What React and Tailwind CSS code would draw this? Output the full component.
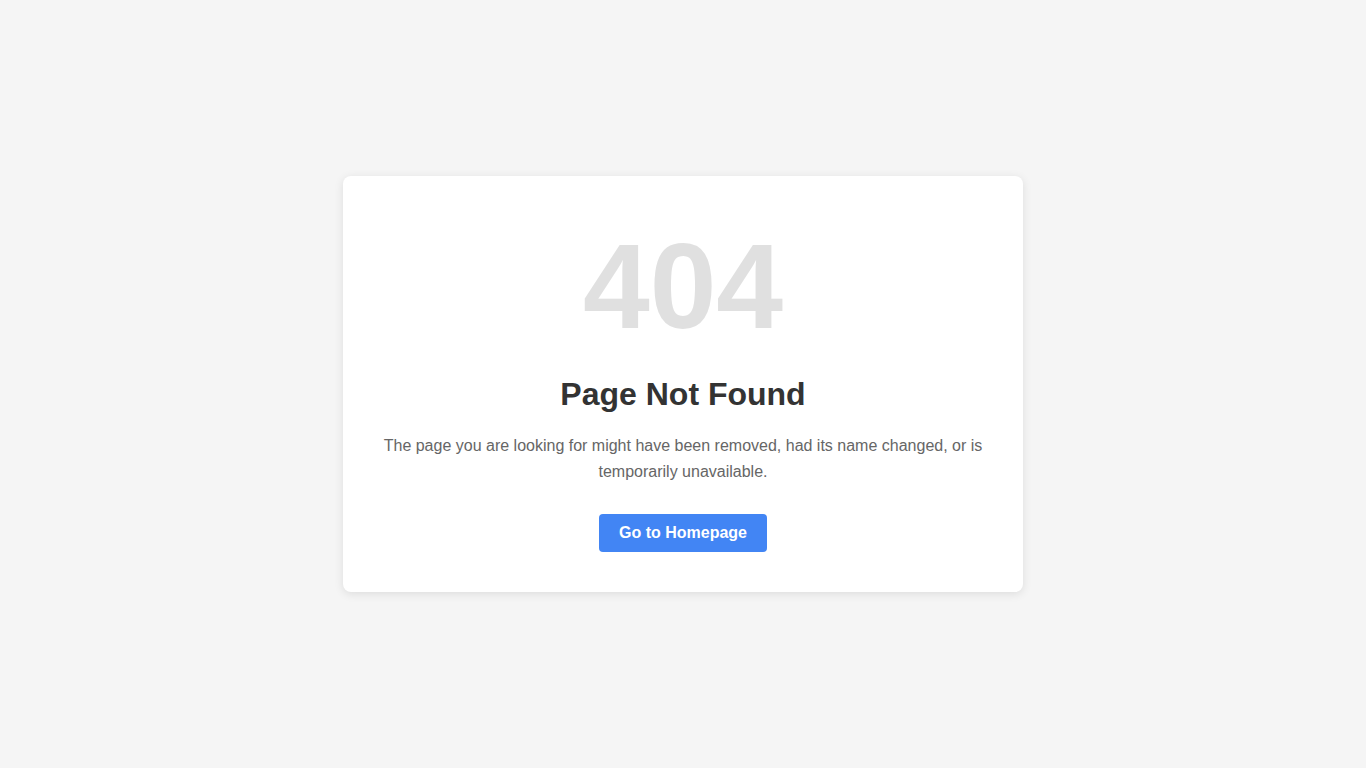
import React from 'react';

const App = () => {
  return (
    <div className="min-h-screen bg-[#f5f5f5] flex items-center justify-center font-['Liberation_Sans',Arial,sans-serif]">
      <div className="w-[680px] bg-white rounded-lg shadow-[0_2px_10px_rgba(0,0,0,0.1)] p-10 text-center">
        <div className="text-[120px] font-bold leading-[140px] text-[#e0e0e0] mb-5">404</div>
        <h1 className="text-[32px] font-bold leading-[normal] text-[#333] mb-5">Page Not Found</h1>
        <p className="text-base leading-[1.6] text-[#666] mb-[30px]">
          The page you are looking for might have been removed, had its name changed, or is temporarily unavailable.
        </p>
        <a
          href="#"
          className="inline-block bg-[#4285f4] text-white font-bold text-base leading-[normal] px-5 py-[10px] rounded"
        >
          Go to Homepage
        </a>
      </div>
    </div>
  );
};

export default App;
